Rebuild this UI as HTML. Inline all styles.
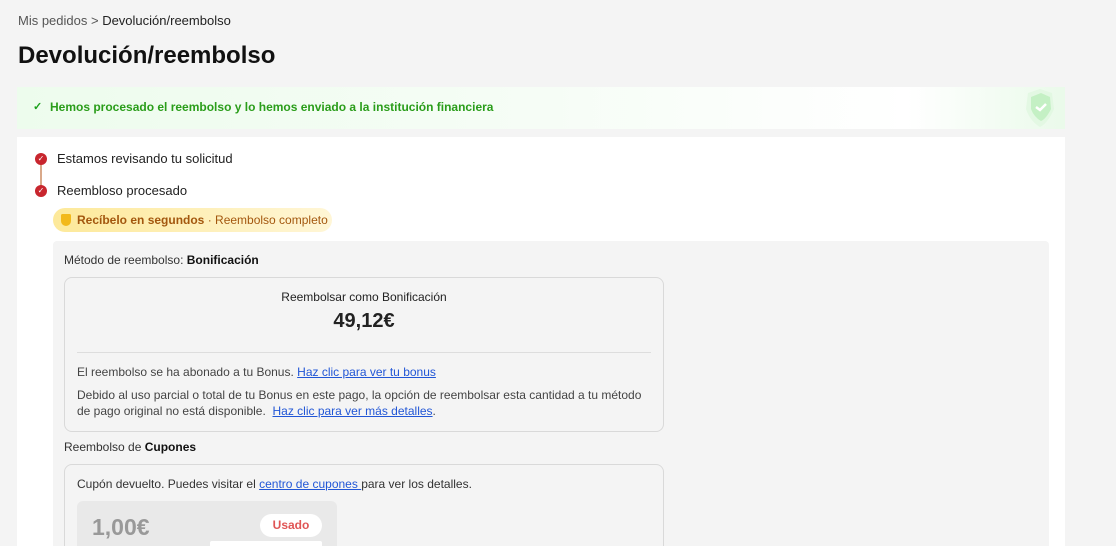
<!DOCTYPE html>
<html><head><meta charset="utf-8"><style>
*{margin:0;padding:0;box-sizing:border-box}
html,body{width:1116px;height:546px;overflow:hidden}
body{background:#f4f4f4;font-family:"Liberation Sans",Arial,sans-serif;color:#222;position:relative}
.a{position:absolute}
a{color:#2156d6;text-decoration:underline}
</style></head><body>
<div class="a" style="left:18px;top:13px;font-size:13px;color:#555">Mis pedidos &gt; <span style="color:#222">Devolución/reembolso</span></div>
<div class="a" style="left:18px;top:42px;font-size:24px;font-weight:bold;color:#111">Devolución/reembolso</div>
<div class="a" style="left:17px;top:87px;width:1048px;height:42px;background:linear-gradient(90deg,#edfced 0%,#f6fdf6 50%,#fff 85%,#eafaea 100%)"></div>
<svg class="a" style="left:1010px;top:87px" width="55" height="42" viewBox="0 0 55 42"><path d="M18 6 L30 2 L42 6 L44 22 Q38 36 30 40 Q20 34 16 22 Z" fill="#e0f7e0" opacity=".8"/><path d="M21 10 L31 6 L40 10 L41 22 Q36 32 31 34 Q24 30 21 22Z" fill="#c4f0c4"/><path d="M26 20l4 3 6-6" stroke="#fff" stroke-width="2.5" fill="none"/></svg>
<div class="a" style="left:33px;top:100px;font-size:11px;color:#1aa01a;font-weight:bold">✓</div>
<div class="a" style="left:50px;top:100px;font-size:12px;color:#2a9d1a;font-weight:bold">Hemos procesado el reembolso y lo hemos enviado a la institución financiera</div>
<div class="a" style="left:17px;top:137px;width:1048px;height:420px;background:#fff"></div>
<div class="a" style="left:40px;top:159px;width:2px;height:32px;background:#d9a98a"></div>
<div class="a" style="left:35px;top:153px;width:12px;height:12px;border-radius:50%;background:#c8262e;color:#fff;font-size:8px;text-align:center;line-height:12px">✓</div>
<div class="a" style="left:35px;top:185px;width:12px;height:12px;border-radius:50%;background:#c8262e;color:#fff;font-size:8px;text-align:center;line-height:12px">✓</div>
<div class="a" style="left:57px;top:151px;font-size:13px">Estamos revisando tu solicitud</div>
<div class="a" style="left:57px;top:183px;font-size:13px">Reembloso procesado</div>
<div class="a" style="left:53px;top:208px;width:279px;height:24px;border-radius:12px;background:linear-gradient(90deg,#fde99a,#fff6d6);font-size:12px;line-height:24px;padding-left:24px;color:#a3570e"><span style="position:absolute;left:8px;top:6px;width:10px;height:12px;background:#f2b91b;border-radius:2px 2px 6px 6px"></span><b>Recíbelo en segundos</b> · Reembolso completo</div>
<div class="a" style="left:53px;top:241px;width:996px;height:320px;background:#f4f4f4;border-radius:4px"></div>
<div class="a" style="left:64px;top:253px;font-size:12px;color:#333">Método de reembolso: <b style="color:#111">Bonificación</b></div>
<div class="a" style="left:64px;top:277px;width:600px;height:155px;border:1px solid #d9d9d9;border-radius:8px"></div>
<div class="a" style="left:64px;top:290px;width:600px;text-align:center;font-size:12px">Reembolsar como Bonificación</div>
<div class="a" style="left:64px;top:310px;width:600px;text-align:center;font-size:20px;font-weight:bold">49,12€</div>
<div class="a" style="left:77px;top:352px;width:574px;height:1px;background:#ddd"></div>
<div class="a" style="left:77px;top:365px;font-size:12px;color:#444">El reembolso se ha abonado a tu Bonus. <a>Haz clic para ver tu bonus</a></div>
<div class="a" style="left:77px;top:387px;width:580px;font-size:12px;line-height:16px;color:#444">Debido al uso parcial o total de tu Bonus en este pago, la opción de reembolsar esta cantidad a tu método de pago original no está disponible. &nbsp;<a>Haz clic para ver más detalles</a>.</div>
<div class="a" style="left:64px;top:440px;font-size:12px;color:#333">Reembolso de <b style="color:#111">Cupones</b></div>
<div class="a" style="left:64px;top:464px;width:600px;height:100px;border:1px solid #d9d9d9;border-radius:8px"></div>
<div class="a" style="left:77px;top:477px;font-size:12px;color:#333">Cupón devuelto. Puedes visitar el <a>centro de cupones </a>para ver los detalles.</div>
<div class="a" style="left:77px;top:501px;width:260px;height:60px;background:#e9e9e9;border-radius:6px"></div>
<div class="a" style="left:92px;top:514px;font-size:23px;font-weight:bold;color:#999">1,00€</div>
<div class="a" style="left:260px;top:514px;width:62px;height:23px;background:#fff;border-radius:12px;text-align:center;line-height:23px;font-size:12px;font-weight:bold;color:#e05555">Usado</div>
<div class="a" style="left:210px;top:541px;width:112px;height:10px;background:#fff;border-radius:2px"></div>
</body></html>
